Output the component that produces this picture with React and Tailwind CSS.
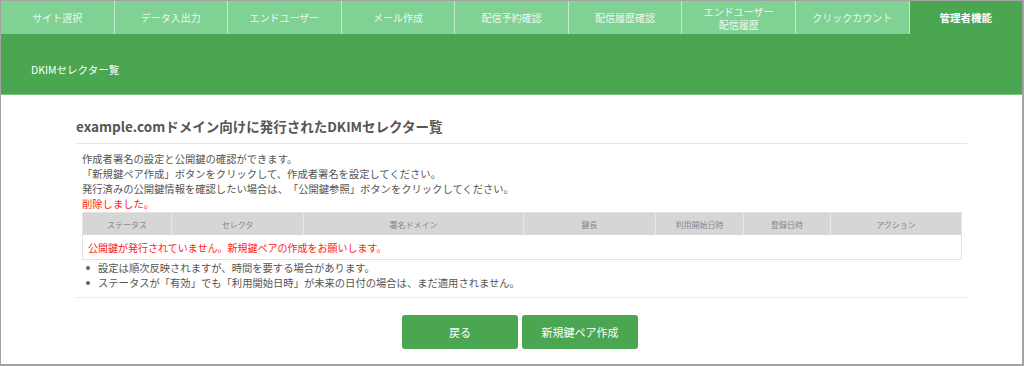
const tabs = [
  { label: "サイト選択" },
  { label: "データ入出力" },
  { label: "エンドユーザー" },
  { label: "メール作成" },
  { label: "配信予約確認" },
  { label: "配信履歴確認" },
  { label: "エンドユーザー", sub: "配信履歴" },
  { label: "クリックカウント" },
  { label: "管理者機能", active: true },
];

const columns = [
  { label: "ステータス", w: "w-[88px]" },
  { label: "セレクタ", w: "w-[132px]" },
  { label: "署名ドメイン", w: "w-[220px]" },
  { label: "鍵長", w: "w-[132px]" },
  { label: "利用開始日時", w: "w-[88px]" },
  { label: "登録日時", w: "w-[87px]" },
  { label: "アクション", w: "flex-1" },
];

const notes = [
  "設定は順次反映されますが、時間を要する場合があります。",
  "ステータスが「有効」でも「利用開始日時」が未来の日付の場合は、まだ適用されません。",
];

export default function App() {
  return (
    <div
      className="w-[1024px] h-[366px] overflow-hidden bg-white border-l border-t border-r-2 border-b-2 border-[#a3a3a3] flex flex-col text-[#555] [text-spacing-trim:space-all]"
      style={{ fontFamily: "'Noto Sans CJK JP', 'Noto Sans', sans-serif" }}
    >
      {/* tab bar */}
      <div className="flex h-[33px] bg-[#80d194]">
        {tabs.map((t, i) => (
          <div
            key={i}
            className={`flex-1 flex flex-col items-center justify-center leading-[13px] ${
              i > 0 ? "border-l border-[#c2e9cb]" : ""
            } ${t.active ? "bg-[#4aa651] text-white font-bold text-[10.5px]" : "text-[#eef8f0] text-[10px]"}`}
          >
            <span>{t.label}</span>
            {t.sub && <span>{t.sub}</span>}
          </div>
        ))}
      </div>

      {/* page header */}
      <div className="h-[61px] bg-[#4aa651] border-b border-[#7cc483] flex items-center pl-[30px] pt-[12px]">
        <span className="text-white text-[10.5px]">DKIMセレクター覧</span>
      </div>

      {/* content */}
      <div className="ml-[75px] w-[891px] flex flex-col">
        <h1 className="mt-[21px] text-[13.5px] leading-[20px] font-bold text-[#555]">
          example.comドメイン向けに発行されたDKIMセレクター覧
        </h1>
        <div className="mt-[7px] border-t border-[#e6e6e6]" />

        <div className="px-[6px] pt-[7px] text-[10.3px] leading-[15px]">
          <p>作成者署名の設定と公開鍵の確認ができます。</p>
          <p>「新規鍵ペア作成」ボタンをクリックして、作成者署名を設定してください。</p>
          <p>発行済みの公開鍵情報を確認したい場合は、「公開鍵参照」ボタンをクリックしてください。</p>
          <p className="text-[#ff2020]">削除しました。</p>

          <div className="mt-[1px] w-[880px] border border-[#e3e3e3]">
            <div className="flex h-[22px] bg-[#d6d6d6]">
              {columns.map((c, i) => (
                <div
                  key={i}
                  className={`${c.w} ${i > 0 ? "border-l border-[#e8e8e8]" : ""} flex items-center justify-center text-[8px] text-[#888]`}
                >
                  {c.label}
                </div>
              ))}
            </div>
            <div className="h-[24px] flex items-center px-[5px] text-[10px] text-[#ff2020]">
              公開鍵が発行されていません。新規鍵ペアの作成をお願いします。
            </div>
          </div>

          <ul>
            {notes.map((n, i) => (
              <li key={i} className="flex items-center">
                <span className="w-[16px] flex pl-[4px]">
                  <span className="w-[4px] h-[4px] rounded-full bg-[#666]" />
                </span>
                {n}
              </li>
            ))}
          </ul>
        </div>
        <div className="mt-[7px] border-t border-[#ececec]" />
      </div>

      <div className="mt-[17px] flex justify-center gap-[4px] pl-[17px]">
        <button className="w-[116px] h-[34px] rounded-[3px] bg-[#4aa651] text-white text-[11px]">
          戻る
        </button>
        <button className="w-[116px] h-[34px] rounded-[3px] bg-[#4aa651] text-white text-[11px]">
          新規鍵ペア作成
        </button>
      </div>
    </div>
  );
}
